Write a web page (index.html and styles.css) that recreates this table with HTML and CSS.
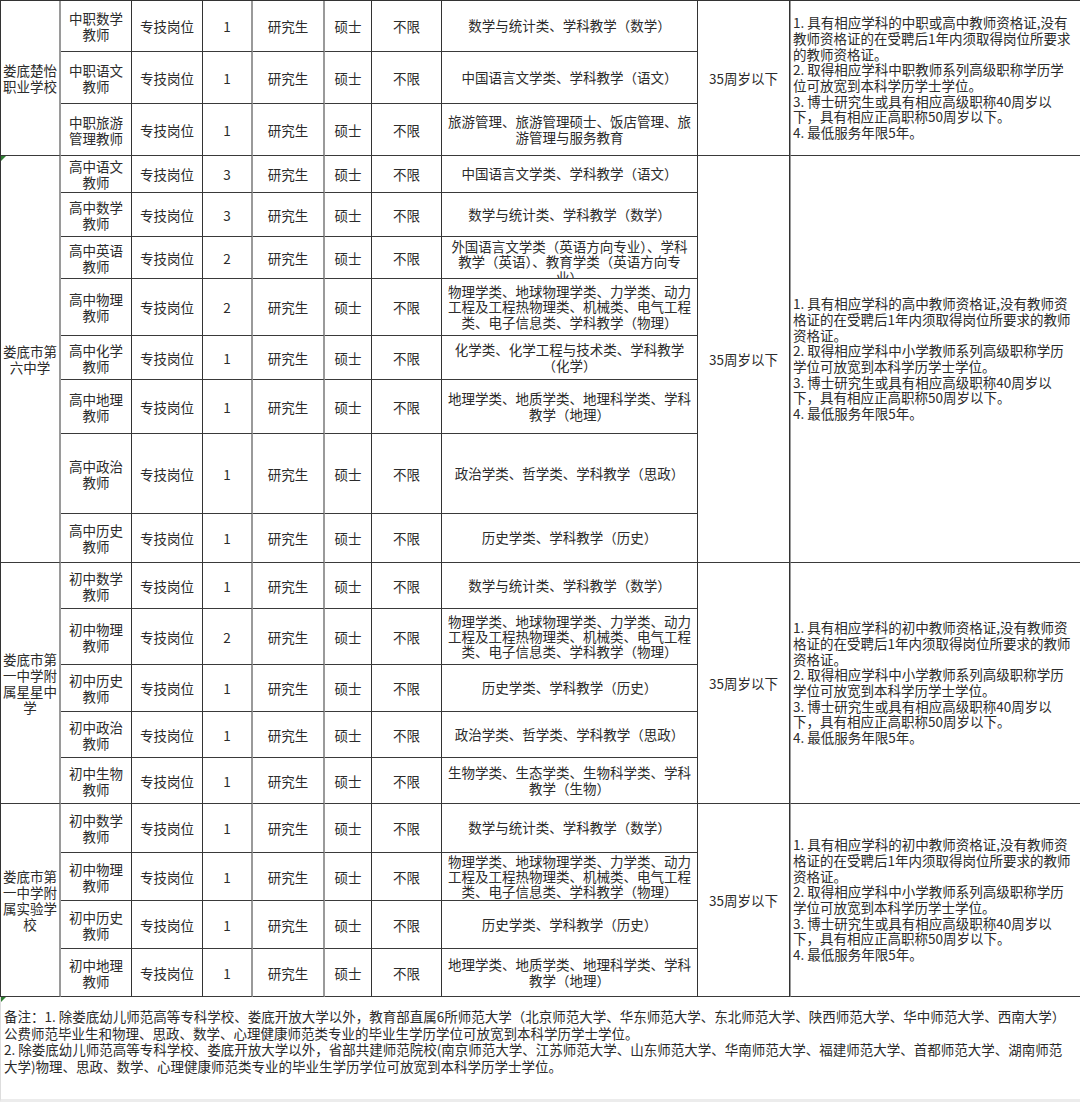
FILE: index.html
```html
<!DOCTYPE html>
<html lang="zh-CN">
<head>
<meta charset="utf-8">
<title>招聘岗位表</title>
<link rel="stylesheet" href="styles.css">
</head>
<body>
<div class="sheet">
  <!-- School 1 -->
  <div class="c school g span3">娄底楚怡<br>职业学校</div>
  <div class="c">中职数学<br>教师</div><div class="c">专技岗位</div><div class="c g">1</div><div class="c g">研究生</div><div class="c">硕士</div><div class="c">不限</div>
  <div class="c major">数学与统计类、学科教学（数学）</div>
  <div class="c age span3">35周岁以下</div>
  <div class="c req span3">1. 具有相应学科的中职或高中教师资格证,没有<br>教师资格证的在受聘后1年内须取得岗位所要求<br>的教师资格证。<br>2. 取得相应学科中职教师系列高级职称学历学<br>位可放宽到本科学历学士学位。<br>3. 博士研究生或具有相应高级职称40周岁以<br>下，具有相应正高职称50周岁以下。<br>4. 最低服务年限5年。</div>
  <div class="c">中职语文<br>教师</div><div class="c">专技岗位</div><div class="c g">1</div><div class="c g">研究生</div><div class="c">硕士</div><div class="c">不限</div>
  <div class="c major">中国语言文学类、学科教学（语文）</div>
  <div class="c">中职旅游<br>管理教师</div><div class="c">专技岗位</div><div class="c g">1</div><div class="c g">研究生</div><div class="c">硕士</div><div class="c">不限</div>
  <div class="c major">旅游管理、旅游管理硕士、饭店管理、旅<br>游管理与服务教育</div>

  <!-- School 2 -->
  <div class="c school g span8 mark">娄底市第<br>六中学</div>
  <div class="c">高中语文<br>教师</div><div class="c">专技岗位</div><div class="c g">3</div><div class="c g">研究生</div><div class="c">硕士</div><div class="c">不限</div>
  <div class="c major">中国语言文学类、学科教学（语文）</div>
  <div class="c age span8">35周岁以下</div>
  <div class="c req span8">1. 具有相应学科的高中教师资格证,没有教师资<br>格证的在受聘后1年内须取得岗位所要求的教师<br>资格证。<br>2. 取得相应学科中小学教师系列高级职称学历<br>学位可放宽到本科学历学士学位。<br>3. 博士研究生或具有相应高级职称40周岁以<br>下，具有相应正高职称50周岁以下。<br>4. 最低服务年限5年。</div>
  <div class="c">高中数学<br>教师</div><div class="c">专技岗位</div><div class="c g">3</div><div class="c g">研究生</div><div class="c">硕士</div><div class="c">不限</div>
  <div class="c major">数学与统计类、学科教学（数学）</div>
  <div class="c">高中英语<br>教师</div><div class="c">专技岗位</div><div class="c g">2</div><div class="c g">研究生</div><div class="c">硕士</div><div class="c">不限</div>
  <div class="c major clip">外国语言文学类（英语方向专业）、学科<br>教学（英语）、教育学类（英语方向专<br>业）</div>
  <div class="c">高中物理<br>教师</div><div class="c">专技岗位</div><div class="c g">2</div><div class="c g">研究生</div><div class="c">硕士</div><div class="c">不限</div>
  <div class="c major">物理学类、地球物理学类、力学类、动力<br>工程及工程热物理类、机械类、电气工程<br>类、电子信息类、学科教学（物理）</div>
  <div class="c">高中化学<br>教师</div><div class="c">专技岗位</div><div class="c g">1</div><div class="c g">研究生</div><div class="c">硕士</div><div class="c">不限</div>
  <div class="c major">化学类、化学工程与技术类、学科教学<br>（化学）</div>
  <div class="c">高中地理<br>教师</div><div class="c">专技岗位</div><div class="c g">1</div><div class="c g">研究生</div><div class="c">硕士</div><div class="c">不限</div>
  <div class="c major">地理学类、地质学类、地理科学类、学科<br>教学（地理）</div>
  <div class="c">高中政治<br>教师</div><div class="c">专技岗位</div><div class="c g">1</div><div class="c g">研究生</div><div class="c">硕士</div><div class="c">不限</div>
  <div class="c major">政治学类、哲学类、学科教学（思政）</div>
  <div class="c">高中历史<br>教师</div><div class="c">专技岗位</div><div class="c g">1</div><div class="c g">研究生</div><div class="c">硕士</div><div class="c">不限</div>
  <div class="c major">历史学类、学科教学（历史）</div>

  <!-- School 3 -->
  <div class="c school g span5">娄底市第<br>一中学附<br>属星星中<br>学</div>
  <div class="c">初中数学<br>教师</div><div class="c">专技岗位</div><div class="c g">1</div><div class="c g">研究生</div><div class="c">硕士</div><div class="c">不限</div>
  <div class="c major">数学与统计类、学科教学（数学）</div>
  <div class="c age span5">35周岁以下</div>
  <div class="c req span5">1. 具有相应学科的初中教师资格证,没有教师资<br>格证的在受聘后1年内须取得岗位所要求的教师<br>资格证。<br>2. 取得相应学科中小学教师系列高级职称学历<br>学位可放宽到本科学历学士学位。<br>3. 博士研究生或具有相应高级职称40周岁以<br>下，具有相应正高职称50周岁以下。<br>4. 最低服务年限5年。</div>
  <div class="c">初中物理<br>教师</div><div class="c">专技岗位</div><div class="c g">2</div><div class="c g">研究生</div><div class="c">硕士</div><div class="c">不限</div>
  <div class="c major">物理学类、地球物理学类、力学类、动力<br>工程及工程热物理类、机械类、电气工程<br>类、电子信息类、学科教学（物理）</div>
  <div class="c">初中历史<br>教师</div><div class="c">专技岗位</div><div class="c g">1</div><div class="c g">研究生</div><div class="c">硕士</div><div class="c">不限</div>
  <div class="c major">历史学类、学科教学（历史）</div>
  <div class="c">初中政治<br>教师</div><div class="c">专技岗位</div><div class="c g">1</div><div class="c g">研究生</div><div class="c">硕士</div><div class="c">不限</div>
  <div class="c major">政治学类、哲学类、学科教学（思政）</div>
  <div class="c">初中生物<br>教师</div><div class="c">专技岗位</div><div class="c g">1</div><div class="c g">研究生</div><div class="c">硕士</div><div class="c">不限</div>
  <div class="c major">生物学类、生态学类、生物科学类、学科<br>教学（生物）</div>

  <!-- School 4 -->
  <div class="c school g span4">娄底市第<br>一中学附<br>属实验学<br>校</div>
  <div class="c">初中数学<br>教师</div><div class="c">专技岗位</div><div class="c g">1</div><div class="c g">研究生</div><div class="c">硕士</div><div class="c">不限</div>
  <div class="c major">数学与统计类、学科教学（数学）</div>
  <div class="c age span4">35周岁以下</div>
  <div class="c req span4">1. 具有相应学科的初中教师资格证,没有教师资<br>格证的在受聘后1年内须取得岗位所要求的教师<br>资格证。<br>2. 取得相应学科中小学教师系列高级职称学历<br>学位可放宽到本科学历学士学位。<br>3. 博士研究生或具有相应高级职称40周岁以<br>下，具有相应正高职称50周岁以下。<br>4. 最低服务年限5年。</div>
  <div class="c">初中物理<br>教师</div><div class="c">专技岗位</div><div class="c g">1</div><div class="c g">研究生</div><div class="c">硕士</div><div class="c">不限</div>
  <div class="c major">物理学类、地球物理学类、力学类、动力<br>工程及工程热物理类、机械类、电气工程<br>类、电子信息类、学科教学（物理）</div>
  <div class="c">初中历史<br>教师</div><div class="c">专技岗位</div><div class="c g">1</div><div class="c g">研究生</div><div class="c">硕士</div><div class="c">不限</div>
  <div class="c major">历史学类、学科教学（历史）</div>
  <div class="c">初中地理<br>教师</div><div class="c">专技岗位</div><div class="c g">1</div><div class="c g">研究生</div><div class="c">硕士</div><div class="c">不限</div>
  <div class="c major">地理学类、地质学类、地理科学类、学科<br>教学（地理）</div>
</div>
<div class="notes mark">
  <p>备注：1. 除娄底幼儿师范高等专科学校、娄底开放大学以外，教育部直属6所师范大学（北京师范大学、华东师范大学、东北师范大学、陕西师范大学、华中师范大学、西南大学）<br>公费师范毕业生和物理、思政、数学、心理健康师范类专业的毕业生学历学位可放宽到本科学历学士学位。</p>
  <p>2. 除娄底幼儿师范高等专科学校、娄底开放大学以外，省部共建师范院校(南京师范大学、江苏师范大学、山东师范大学、华南师范大学、福建师范大学、首都师范大学、湖南师范<br>大学)物理、思政、数学、心理健康师范类专业的毕业生学历学位可放宽到本科学历学士学位。</p>
</div>
</body>
</html>
```

FILE: styles.css
```css
html, body {
  margin: 0;
  padding: 0;
  background: #ffffff;
}

body {
  width: 1080px;
  height: 1102px;
  overflow: hidden;
  font-family: "Noto Sans CJK SC", "Liberation Sans", sans-serif;
  font-size: 13.5px;
  color: #2b2b2b;
}

.sheet {
  display: grid;
  grid-template-columns: 60px 71px 71px 50px 72px 47px 70px 256px 92px 291px;
  grid-template-rows: 51px 52px 52px 37px 44px 42px 57px 44px 54px 80px 49px 46px 56px 47px 46px 46px 49px 48px 48px 48px;
  border-top: 1px solid #333333;
  border-left: 1px solid #333333;
  width: 1081px;
  box-sizing: border-box;
}

.c {
  box-sizing: border-box;
  border-right: 1px solid #333333;
  border-bottom: 1px solid #3a3a3a;
  display: flex;
  align-items: center;
  justify-content: center;
  text-align: center;
  white-space: nowrap;
  line-height: 16px;
  overflow: hidden;
  position: relative;
  font-weight: 400;
}

.g {
  border-right: 2px solid #9a9a9a;
}

.span3 { grid-row: span 3; }
.span4 { grid-row: span 4; }
.span5 { grid-row: span 5; }
.span8 { grid-row: span 8; }

.major {
  line-height: 15.3px;
}

.clip {
  align-items: flex-start;
  padding-top: 2px;
}

.age {
  font-size: 13.5px;
}

.req {
  justify-content: flex-start;
  text-align: left;
  padding-left: 2px;
  line-height: 15.7px;
  border-left: 1px solid #9a9a9a;
}

.mark::before {
  content: "";
  position: absolute;
  top: 0;
  left: 0;
  border-top: 5px solid #2e7d32;
  border-right: 5px solid transparent;
}

.notes {
  position: relative;
  box-sizing: border-box;
  height: 105px;
  padding: 11px 0 0 3px;
  border-left: 1px solid #dddddd;
  border-bottom: 3px solid #ececec;
  white-space: nowrap;
  font-weight: 400;
  line-height: 16.6px;
}

.notes p {
  margin: 0;
}
```
